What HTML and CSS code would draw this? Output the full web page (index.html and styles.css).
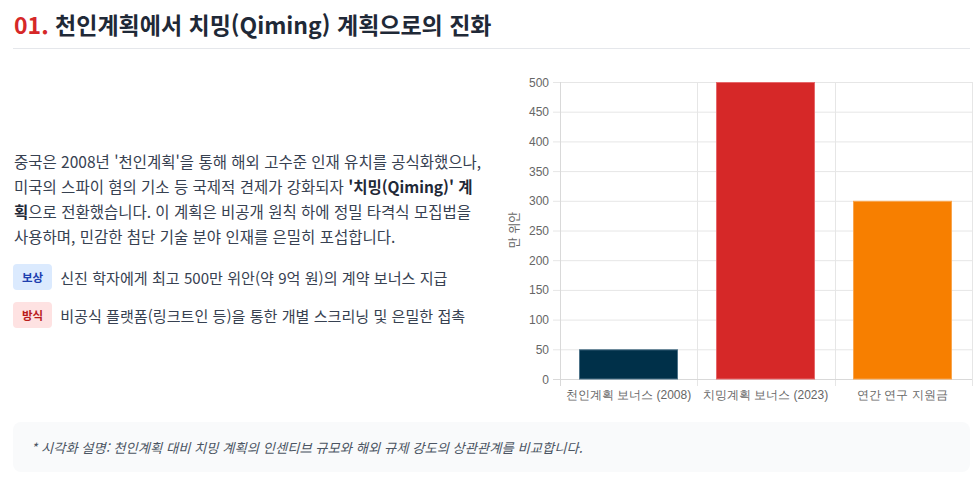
FILE: index.html
```html
<!DOCTYPE html>
<html lang="ko">
<head>
<meta charset="utf-8">
<link rel="stylesheet" href="styles.css">
</head>
<body>
<div class="page">
  <header class="header">
    <h1 class="title"><span class="num">01.</span> 천인계획에서 치밍(Qiming) 계획으로의 진화</h1>
  </header>
  <main class="main">
    <section class="text-col">
      <p class="lead">중국은 2008년 '천인계획'을 통해 해외 고수준 인재 유치를 공식화했으나, 미국의 스파이 혐의 기소 등 국제적 견제가 강화되자 <strong>'치밍(Qiming)' 계획</strong>으로 전환했습니다. 이 계획은 비공개 원칙 하에 정밀 타격식 모집법을 사용하며, 민감한 첨단 기술 분야 인재를 은밀히 포섭합니다.</p>
      <ul class="items">
        <li class="item"><span class="badge badge-blue">보상</span><span>신진 학자에게 최고 500만 위안(약 9억 원)의 계약 보너스 지급</span></li>
        <li class="item"><span class="badge badge-red">방식</span><span>비공식 플랫폼(링크트인 등)을 통한 개별 스크리닝 및 은밀한 접촉</span></li>
      </ul>
    </section>
    <section class="chart-col">
      <svg class="chart" width="478" height="344" viewBox="497 66 478 344" xmlns="http://www.w3.org/2000/svg">
        <g stroke="#e6e6e6" stroke-width="1">
          <line x1="553" y1="82.5" x2="972" y2="82.5"/>
          <line x1="553" y1="112.2" x2="972" y2="112.2"/>
          <line x1="553" y1="141.9" x2="972" y2="141.9"/>
          <line x1="553" y1="171.6" x2="972" y2="171.6"/>
          <line x1="553" y1="201.3" x2="972" y2="201.3"/>
          <line x1="553" y1="231" x2="972" y2="231"/>
          <line x1="553" y1="260.7" x2="972" y2="260.7"/>
          <line x1="553" y1="290.4" x2="972" y2="290.4"/>
          <line x1="553" y1="320.1" x2="972" y2="320.1"/>
          <line x1="553" y1="349.8" x2="972" y2="349.8"/>
          <line x1="697.5" y1="82" x2="697.5" y2="386"/>
          <line x1="835.5" y1="82" x2="835.5" y2="386"/>
          <line x1="972.5" y1="82" x2="972.5" y2="386"/>
        </g>
        <g stroke="#d9d9d9" stroke-width="1">
          <line x1="560.5" y1="82" x2="560.5" y2="386"/>
          <line x1="553" y1="379.5" x2="972" y2="379.5"/>
        </g>
        <g class="tick" text-anchor="end">
          <text x="549" y="86.5">500</text>
          <text x="549" y="116.2">450</text>
          <text x="549" y="145.9">400</text>
          <text x="549" y="175.6">350</text>
          <text x="549" y="205.3">300</text>
          <text x="549" y="235">250</text>
          <text x="549" y="264.7">200</text>
          <text x="549" y="294.4">150</text>
          <text x="549" y="324.1">100</text>
          <text x="549" y="353.8">50</text>
          <text x="549" y="383.5">0</text>
        </g>
        <text class="axis-title" x="0" y="0" text-anchor="middle" transform="translate(519 230) rotate(-90)">만 위안</text>
        <rect x="579.5" y="349.8" width="98" height="29.2" fill="#003049" stroke="#4d7389" stroke-width="1"/>
        <rect x="716.5" y="82.5" width="98" height="296.5" fill="#d62828" stroke="#e6686a" stroke-width="1"/>
        <rect x="853.5" y="201.3" width="98" height="177.7" fill="#f77f00" stroke="#f9a54d" stroke-width="1"/>
        <g class="tick" text-anchor="middle">
          <text x="628.5" y="399">천인계획 보너스 (2008)</text>
          <text x="765.5" y="399">치밍계획 보너스 (2023)</text>
          <text x="902.5" y="399">연간 연구 지원금</text>
        </g>
      </svg>
    </section>
  </main>
  <footer class="note">
    <p class="note-text">* 시각화 설명: 천인계획 대비 치밍 계획의 인센티브 규모와 해외 규제 강도의 상관관계를 비교합니다.</p>
  </footer>
</div>
</body>
</html>
```

FILE: styles.css
```css
* { box-sizing: border-box; }
body {
  margin: 0;
  background: #ffffff;
  font-family: "Noto Sans CJK KR", "Noto Sans", sans-serif;
  color: #374151;
}
.page {
  padding: 0 5px 0 13px;
}
.header {
  padding-top: 8px;
  padding-bottom: 8px;
  border-bottom: 1px solid #e5e7eb;
}
.title {
  margin: 0 0 0 1px;
  font-size: 23px;
  line-height: 32px;
  font-weight: 700;
  color: #1f2937;
}
.num { color: #d62828; }
.main {
  display: grid;
  grid-template-columns: 476px 478px;
  column-gap: 8px;
  align-items: center;
  padding-top: 17px;
  margin-right: -5px;
}
.text-col {
  padding-left: 1px;
}
.lead {
  margin: 0 0 15px 0;
  font-size: 15.5px;
  line-height: 25px;
  color: #374151;
  width: 472px;
}
.lead strong {
  color: #1f2937;
  font-weight: 700;
}
.items {
  list-style: none;
  margin: 0;
  padding: 0;
  display: flex;
  flex-direction: column;
  gap: 12px;
}
.item {
  display: flex;
  align-items: center;
  gap: 8px;
  font-size: 15.1px;
  line-height: 26px;
  color: #374151;
  margin-left: -1px;
}
.badge {
  display: inline-block;
  padding: 1px 9px;
  border-radius: 4px;
  font-size: 11.5px;
  font-weight: 700;
  line-height: 24px;
}
.badge-blue { background: #dbeafe; color: #1e40af; }
.badge-red { background: #fee2e2; color: #b91c1c; }
.chart { display: block; }
.tick {
  font-family: "Liberation Sans", Arial, sans-serif;
  font-size: 12px;
  fill: #666666;
}
.axis-title {
  font-family: "Liberation Sans", "Noto Sans CJK KR", sans-serif;
  font-size: 12px;
  fill: #666666;
}
.note {
  margin-top: 12px;
  background: #f9fafb;
  border-radius: 8px;
  padding: 15px 18px 13px;
}
.note-text {
  margin: 0;
  font-size: 13.3px;
  line-height: 22px;
  font-style: italic;
  color: #4b5563;
}
```
